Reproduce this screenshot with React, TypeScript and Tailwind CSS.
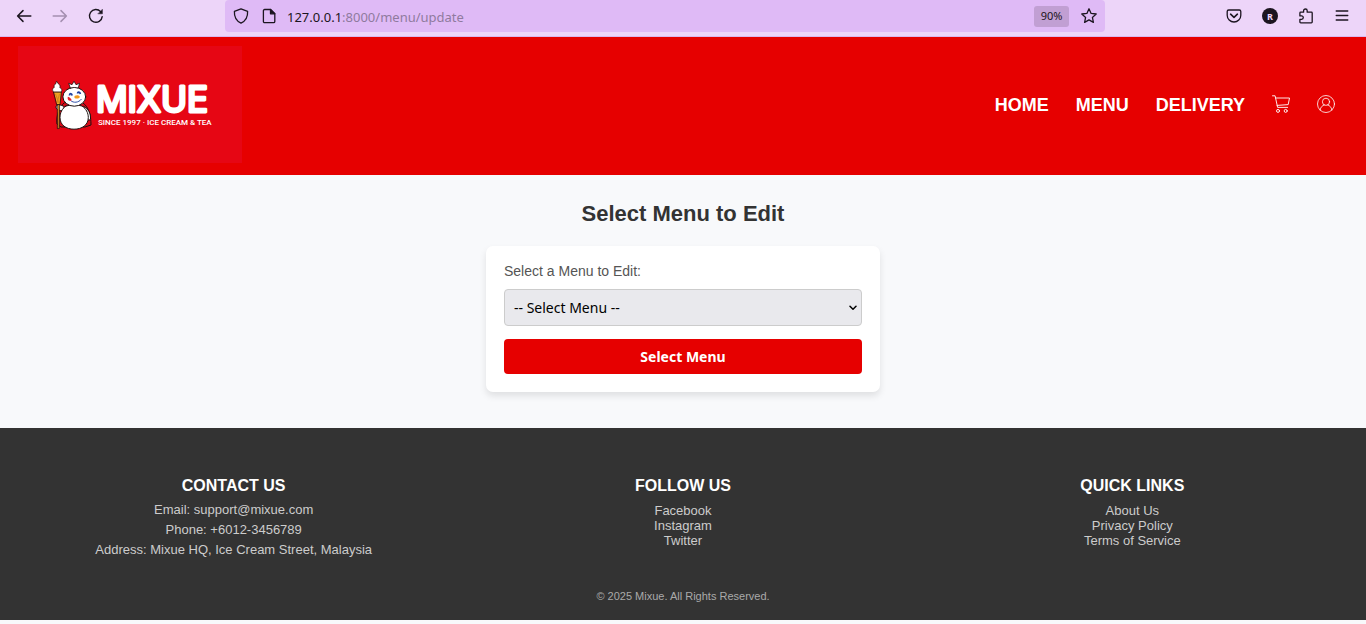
import React from "react";

type LinkColumn = { title: string; links: string[] };

const linkColumns: LinkColumn[] = [
  { title: "FOLLOW US", links: ["Facebook", "Instagram", "Twitter"] },
  { title: "QUICK LINKS", links: ["About Us", "Privacy Policy", "Terms of Service"] },
];

const stroke = {
  fill: "none",
  stroke: "currentColor",
  strokeLinecap: "round" as const,
  strokeLinejoin: "round" as const,
};

function BarButton({ label, muted, children }: { label: string; muted?: boolean; children: React.ReactNode }) {
  return (
    <button
      type="button"
      aria-label={label}
      className={muted ? "grid size-5 place-items-center text-[#a48fb0]" : "grid size-5 place-items-center text-[#1c1520]"}
    >
      <svg viewBox="0 0 16 16" className="size-4" {...stroke} strokeWidth="1.3">
        {children}
      </svg>
    </button>
  );
}

function BrowserBar() {
  return (
    <div className="flex h-[37px] items-start border-b border-[#d9b9ee] bg-[#edd5f9]">
      <div className="flex h-8 w-[225px] shrink-0 items-center gap-4 pl-[14px]">
        <BarButton label="Back">
          <path d="M14.8 8H1.6M7 2.6 1.6 8 7 13.4" strokeWidth="1.5" />
        </BarButton>
        <BarButton label="Forward" muted>
          <path d="M1.2 8h13.2M9 2.6 14.4 8 9 13.4" strokeWidth="1.5" />
        </BarButton>
        <BarButton label="Reload">
          <path d="M14.2 8.6A6.4 6.4 0 1 1 12.6 3.600" strokeWidth="1.4" />
          <path d="M14.400 1.600v4.200h-4.200z" fill="currentColor" strokeWidth="0.500" />
        </BarButton>
      </div>
      <div className="flex h-8 min-w-0 flex-1 items-center rounded-[4px] bg-[#dfbaf6] px-1.5">
        <div className="flex gap-2">
          <BarButton label="Tracking protection">
            <path d="M8 .8 14.6 3.4c.3 5-1.6 9.400-6.600 11.800C3 12.800 1.100 8.400 1.400 3.400z" />
          </BarButton>
          <BarButton label="Site information">
            <path d="M3.600 1.500h5.900L13.800 5.800v7.600a1.200 1.200 0 0 1-1.200 1.200h-9a1.200 1.200 0 0 1-1.200-1.200V2.700a1.200 1.200 0 0 1 1.200-1.200z" />
            <path d="M9.500 1.500v4.300h4.300z" fill="currentColor" />
          </BarButton>
        </div>
        <p className="ml-2 mt-0.5 min-w-0 flex-1 truncate font-['Noto_Sans',sans-serif] text-[13px] leading-5 text-[#8f7a9e]">
          <span className="text-[#1c1520]">127.0.0.1</span>:8000/menu/update
        </p>
        <button
          type="button"
          className="mr-2.5 h-[21px] w-[35px] rounded-[3px] bg-[#c19fd3] font-['Noto_Sans',sans-serif] text-[11px] text-[#1c1520]"
        >
          90%
        </button>
        <BarButton label="Bookmark">
          <path d="m8 .8 2.100 4.600 5.100.6-3.800 3.400 1 5L8 11.900l-4.400 2.500 1-5L.8 6l5.100-.6z" />
        </BarButton>
      </div>
      <div className="flex h-8 w-[261px] shrink-0 items-center justify-end gap-4 pr-[14px]">
        <BarButton label="Save to Pocket">
          <path d="M2.700 2h10.600A1.500 1.500 0 0 1 14.800 3.500v3.700a6.800 6.800 0 0 1-13.600 0V3.500A1.500 1.500 0 0 1 2.700 2z" />
          <path d="M4.600 6.200 8 9.400l3.400-3.200" strokeWidth="1.600" />
        </BarButton>
        <button type="button" aria-label="Account R" className="grid size-5 place-items-center">
          <span className="grid size-4 place-items-center rounded-full bg-[#1c1520] font-['Noto_Sans',sans-serif] text-[9px] font-bold leading-none text-[#edd5f9]">
            R
          </span>
        </button>
        <BarButton label="Extensions">
          <path d="M5.600 4.200V2.800a1.800 1.800 0 0 1 3.600 0v1.400h4.200a.8.8 0 0 1 .8.800v9a.8.8 0 0 1-.8.800H2.700a.8.8 0 0 1-.8-.8v-2.700h1.700a1.700 1.700 0 0 0 0-3.400H1.900V5a.8.8 0 0 1 .8-.8z" />
        </BarButton>
        <BarButton label="Menu">
          <path d="M2.200 3h11.600M2.200 7.500h11.600M2.200 12h11.600" />
        </BarButton>
      </div>
    </div>
  );
}

function Logo() {
  return (
    <svg viewBox="0 0 224 117" role="img" aria-label="Mixue" className="block h-[117px] w-[224px] bg-[#e60614]">
      <g stroke="#1d1210" strokeWidth="1" strokeLinejoin="round" strokeLinecap="round">
        <path d="M46 57c-5 4-8 13-7 21l4 3h24l6-2c0-9-2-18-8-22z" fill="#d80a18" />
        <path d="M46 60.500c-3-2-8-2.500-8 .5 0 3 4 4 6.500 3.500zM66 60.500c4 2 7 7 6.500 12.500-1 2-3.500 1-3.500-1z" fill="#fff" />
        <path d="M48 60c5-1.500 11-1.500 16 0 4 2.500 6.300 7 6.300 11.500C70.300 79 64 83.200 56 83.200S42 79 42 71.500C42 67 44 62.500 48 60z" fill="#fff" />
        <ellipse cx="56.300" cy="50.800" rx="11.400" ry="9.400" fill="#fff" />
        <path d="M52.300 42 50.700 37.300l3.300 1.400 2-3.500 2 3.500 3.500-1.400L60.300 42c-2.400-.7-5.600-.7-8 0z" fill="#fff" strokeWidth="0.800" />
        <path d="M39.600 58h2l-.3 24.600h-1.600z" fill="#c58620" strokeWidth="0.700" />
        <path d="M35.800 45.800h7.600L42 58.500h-3z" fill="#efa323" strokeWidth="0.800" />
        <path d="M35.500 45.800c-2-2-.4-4.200.8-4.400-.8-2 .4-3.300 1.400-3.500l.8-2.700 2.200 3c1.600.8 1.600 2.200 1 3.200 2 .8 2.800 3 1.700 4.400z" fill="#fff" strokeWidth="0.700" />
      </g>
      <path d="M37.500 48 41 57M41.500 48l-2.500 9" stroke="#b86a12" strokeWidth="0.500" />
      <path d="M51.500 49.500c0-2.400 2.200-2.400 2.600 0M59.500 47.500c.3-2 2.400-2 2.800.5" fill="none" stroke="#1c3fa0" strokeWidth="1.800" />
      <path d="M52.500 54.500c3 2.600 8 2.400 11-1.500" fill="none" stroke="#1c3fa0" strokeWidth="0.900" />
      <path d="M56.500 50c2-1.500 5-.8 5.300.8.200 1.800-3.300 2.200-5.300 1.200z" fill="#f39a1d" />
      <path d="M49.800 50.800c1.200 0 3 1.200 4 3.500-2.500 1.200-4.800 0-4-3.500z" fill="#e8202c" />
      <text
        x="78"
        y="66"
        fill="#fff"
        stroke="#fff"
        strokeWidth="3"
        strokeLinejoin="round"
        className="font-[Inter,sans-serif] text-[35px] font-normal"
      >
        MIXUE
      </text>
      <text x="80" y="79" fill="#fff" className="font-['Liberation_Sans_Narrow',Roboto,sans-serif] text-[8px] font-medium">
        SINCE 1997 · ICE CREAM &amp; TEA
      </text>
    </svg>
  );
}

function SiteHeader() {
  return (
    <header className="flex items-center justify-between bg-[#e60000] px-[18px] pb-3 pt-[9px]">
      <a href="#home">
        <Logo />
      </a>
      <nav className="flex items-start gap-[27px] pr-[13px] text-[18px] font-bold leading-5 text-white">
        <a href="#home">HOME</a>
        <a href="#menu">MENU</a>
        <a href="#delivery">DELIVERY</a>
        <a href="#cart" aria-label="Cart">
          <svg viewBox="0 0 18 18" className="size-[18px]" {...stroke} strokeWidth="0.900">
            <path d="M.5.800h2.600l2.500 11.600h10M3.700 3h13.800l-1.300 6.600-11.100.8" />
            <circle cx="6" cy="15.900" r="1.500" />
            <circle cx="13.700" cy="15.900" r="1.500" />
          </svg>
        </a>
        <a href="#account" aria-label="Account">
          <svg viewBox="0 0 18 18" className="size-[18px]" {...stroke} strokeWidth="0.800">
            <circle cx="9" cy="9" r="8.500" />
            <circle cx="9" cy="6.800" r="3.600" />
            <path d="M3.100 15c.5-3 2.200-4.500 4.200-5M14.900 15c-.5-3-2.200-4.500-4.200-5" />
          </svg>
        </a>
      </nav>
    </header>
  );
}

function MenuForm() {
  return (
    <main className="flex flex-col items-center pb-9 pt-[26px]">
      <h1 className="text-[22px] font-bold leading-[25px] text-[#333333]">Select Menu to Edit</h1>
      <form
        onSubmit={(event) => event.preventDefault()}
        className="mt-5 flex w-full max-w-[394px] flex-col rounded-[7px] bg-white px-[18px] pb-[18px] pt-[17px] shadow-[0_4px_7px_rgba(0,0,0,0.1)]"
      >
        <label htmlFor="menu" className="text-[14px] leading-4 text-[#555555]">
          Select a Menu to Edit:
        </label>
        <div className="relative mt-2.5">
          <select
            id="menu"
            className="block h-[37px] w-full appearance-none rounded-[4px] border border-[#cccccc] bg-[#e9e9ed] px-[9px] font-['Noto_Sans',sans-serif] text-[14px] text-black"
          >
            <option>-- Select Menu --</option>
          </select>
          <svg viewBox="0 0 8 6" className="pointer-events-none absolute right-[5px] top-4 h-1.5 w-2" {...stroke} strokeWidth="1.500">
            <path d="m1 1.200 3 3 3-3" />
          </svg>
        </div>
        <button
          type="submit"
          className="mt-[13px] h-[35px] rounded-[4px] bg-[#e60000] font-['Noto_Sans',sans-serif] text-[14px] font-bold text-white"
        >
          Select Menu
        </button>
      </form>
    </main>
  );
}

function SiteFooter() {
  return (
    <footer className="bg-[#333333] px-[18px] pb-[18px] pt-[49px] text-center text-[13px] text-[#cccccc]">
      <div className="grid grid-cols-3 gap-[18px]">
        <section>
          <h2 className="mb-[5px] text-[16px] font-bold leading-[18px] text-white">CONTACT US</h2>
          <div className="leading-5">
            <p>Email: support@mixue.com</p>
            <p>Phone: +6012-3456789</p>
            <p>Address: Mixue HQ, Ice Cream Street, Malaysia</p>
          </div>
        </section>
        {linkColumns.map((column) => (
          <section key={column.title}>
            <h2 className="mb-2 text-[16px] font-bold leading-[18px] text-white">{column.title}</h2>
            <ul className="leading-[15px]">
              {column.links.map((link) => (
                <li key={link}>
                  <a href="#footer">{link}</a>
                </li>
              ))}
            </ul>
          </section>
        ))}
      </div>
      <p className="mt-[30px] text-[11px] leading-3 text-[#aaaaaa]">© 2025 Mixue. All Rights Reserved.</p>
    </footer>
  );
}

export default function App() {
  return (
    <div className="min-h-screen bg-[#f8f9fb] font-['Liberation_Sans',Arial,sans-serif]">
      <BrowserBar />
      <SiteHeader />
      <MenuForm />
      <SiteFooter />
    </div>
  );
}
